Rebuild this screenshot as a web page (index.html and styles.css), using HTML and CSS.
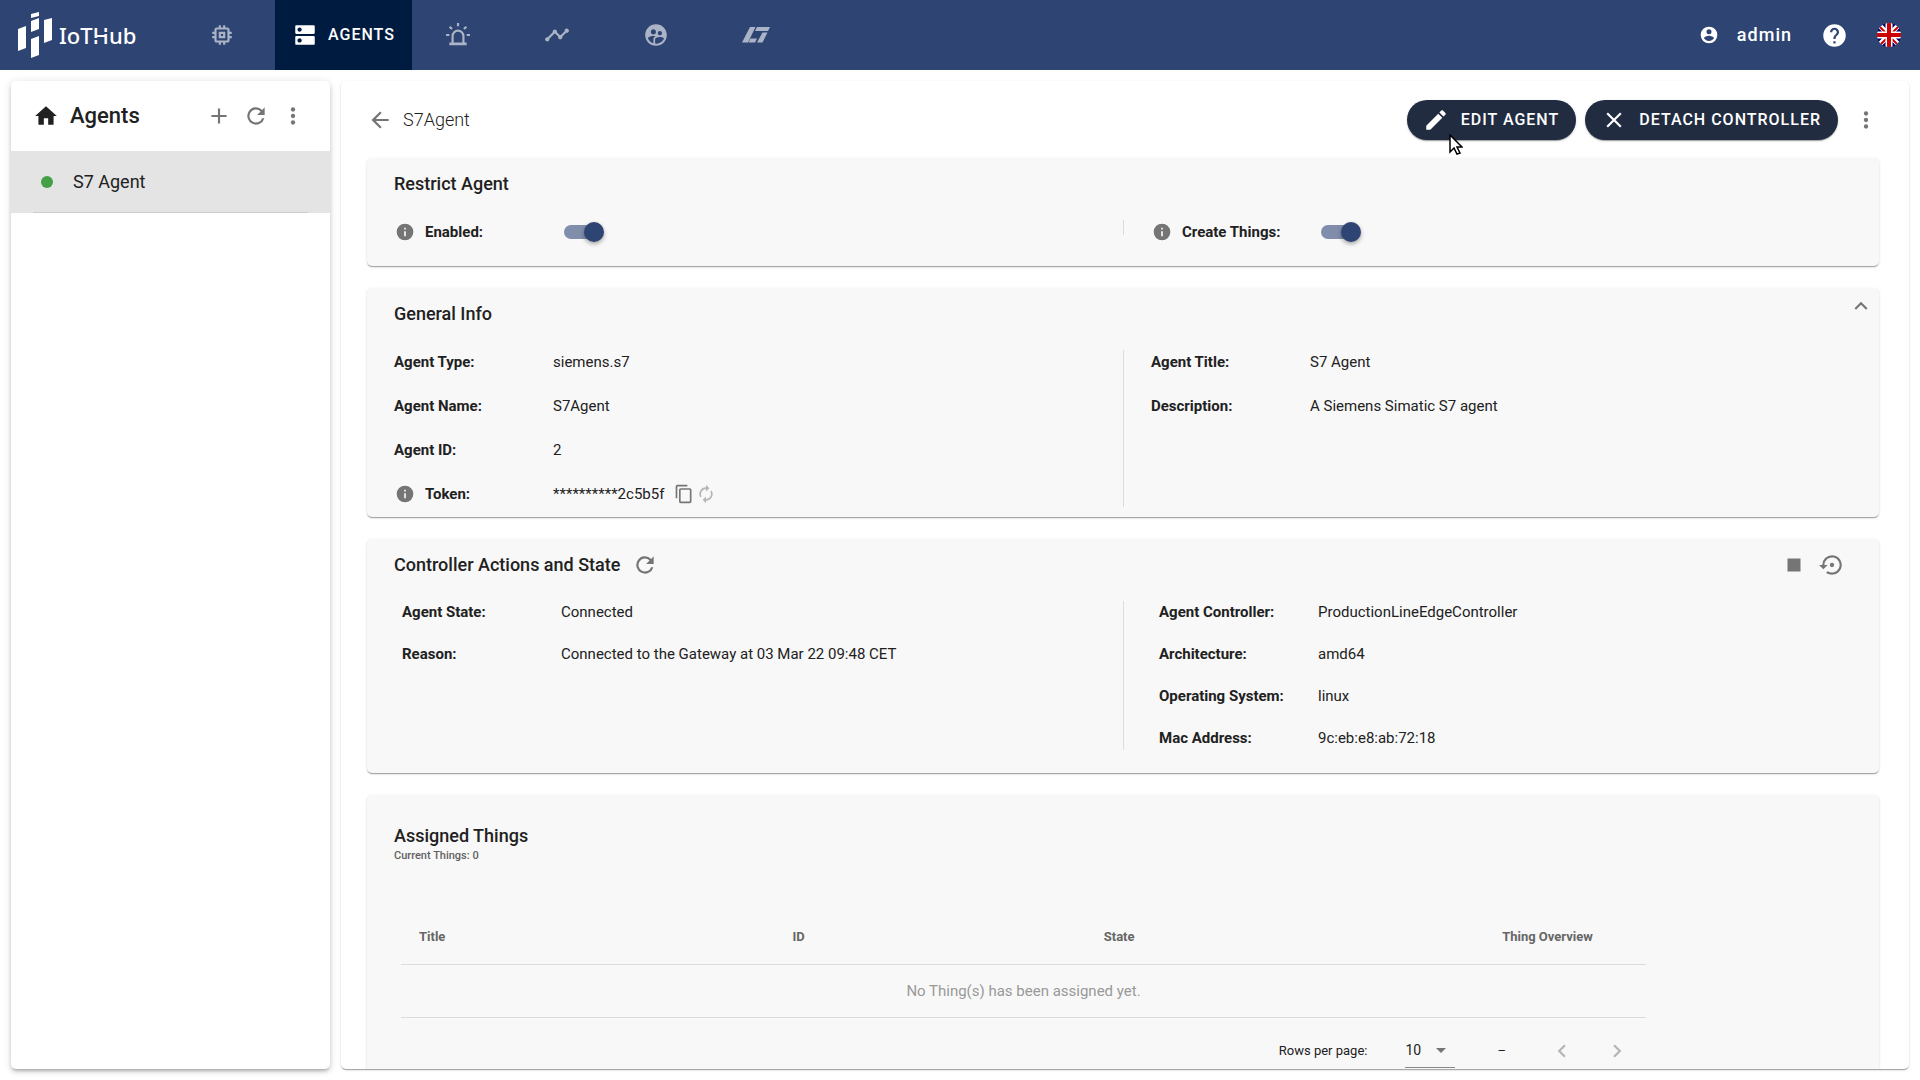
FILE: index.html
```html
<!DOCTYPE html>
<html lang="en">
<head>
<meta charset="utf-8">
<title>IoTHub - S7Agent</title>
<link rel="stylesheet" href="styles.css">
</head>
<body>
<header class="topbar">
  <a class="brand" href="#">
    <svg class="brand-mark" viewBox="0 0 35 47"><path d="M0 17l8-3v22l-8 3zM13 2l8-2v4l-8 2zM13 9l8-3v11l-8 3zM13 27l8-3v19l-8 3zM26 8l8-2v22l-8 3z"/></svg>
    <span class="brand-name">IoT<span class="brand-h">H</span>ub</span>
  </a>
  <nav class="tabs" aria-label="Main">
    <a class="tab" href="#" aria-label="Things"><svg class="icon" viewBox="0 0 24 24"><path d="M15 9H9v6h6V9zm-2 4h-2v-2h2v2zm8-2V9h-2V7c0-1.1-.9-2-2-2h-2V3h-2v2h-2V3H9v2H7c-1.1 0-2 .9-2 2v2H3v2h2v2H3v2h2v2c0 1.1.9 2 2 2h2v2h2v-2h2v2h2v-2h2c1.1 0 2-.9 2-2v-2h2v-2h-2v-2h2zm-4 6H7V7h10v10z"/></svg></a>
    <a class="tab tab-active" href="#" aria-current="page"><svg class="icon" viewBox="0 0 24 24"><path d="M20 13H4c-.55 0-1 .45-1 1v6c0 .55.45 1 1 1h16c.55 0 1-.45 1-1v-6c0-.55-.45-1-1-1zM7 19c-1.1 0-2-.9-2-2s.9-2 2-2 2 .9 2 2-.9 2-2 2zM20 3H4c-.55 0-1 .45-1 1v6c0 .55.45 1 1 1h16c.55 0 1-.45 1-1V4c0-.55-.45-1-1-1zM7 9c-1.1 0-2-.9-2-2s.9-2 2-2 2 .9 2 2-.9 2-2 2z"/></svg>AGENTS</a>
    <a class="tab" href="#" aria-label="Alarms"><svg class="icon" viewBox="0 0 24 24"><path d="M6 19v-6a6 6 0 0 1 12 0v6h2v2.500H4V19zM8 19h8v-6a4 4 0 0 0-8 0zM11 1h2v3h-2zM1 11h3v2H1zM20 11h3v2h-3zM3.600 5L5 3.600 7.200 5.800 5.800 7.200zM19 3.600L20.400 5 18.200 7.200 16.800 5.800z" fill-rule="evenodd"/></svg></a>
    <a class="tab" href="#" aria-label="Analytics"><svg class="icon" viewBox="0 0 24 24"><path d="M23 8c0 1.1-.9 2-2 2-.18 0-.35-.02-.51-.07l-3.560 3.550c.05.16.07.34.07.52 0 1.100-.9 2-2 2s-2-.9-2-2c0-.18.02-.36.07-.52l-2.550-2.550c-.16.05-.34.07-.52.07s-.36-.02-.52-.07l-4.550 4.560c.05.16.07.33.07.51 0 1.100-.9 2-2 2s-2-.9-2-2 .9-2 2-2c.18 0 .35.02.51.07l4.560-4.550C8.020 9.360 8 9.180 8 9c0-1.100.9-2 2-2s2 .9 2 2c0 .18-.02.36-.07.52l2.550 2.550c.16-.05.34-.07.52-.07s.36.02.52.07l3.550-3.560C19.020 8.350 19 8.180 19 8c0-1.100.9-2 2-2s2 .9 2 2z"/></svg></a>
    <a class="tab" href="#" aria-label="Users"><svg class="icon" viewBox="0 0 24 24"><path d="M11.990 2c-5.520 0-10 4.480-10 10s4.480 10 10 10 10-4.480 10-10-4.480-10-10-10zm3.610 6.340c1.070 0 1.930.86 1.930 1.930 0 1.070-.86 1.930-1.930 1.930-1.070 0-1.930-.86-1.930-1.930-.01-1.070.86-1.930 1.930-1.930zm-6-1.580c1.300 0 2.360 1.060 2.360 2.360 0 1.300-1.060 2.360-2.360 2.360s-2.360-1.060-2.360-2.360c0-1.310 1.050-2.360 2.360-2.360zm0 9.130v3.750c-2.400-.75-4.300-2.600-5.140-4.960 1.050-1.120 3.670-1.690 5.140-1.690.53 0 1.200.08 1.900.22-1.640.87-1.900 2.020-1.900 2.680zM11.990 20c-.27 0-.53-.01-.79-.04v-4.070c0-1.420 2.940-2.130 4.400-2.130 1.070 0 2.920.39 3.840 1.150-1.170 2.970-4.060 5.090-7.450 5.090z"/></svg></a>
    <a class="tab" href="#" aria-label="Integrations"><svg class="icon icon-wide" viewBox="0 0 28 16"><path d="M8 0h5.500L6 15.500H0zM15 0h13l-2 4H13zM20.500 5.500h5L20.500 15.500h-5.500zM8.500 11.500h6.500l-2 4H6.500z"/></svg></a>
  </nav>
  <div class="account">
    <button class="user" type="button"><svg class="icon-s" viewBox="0 0 24 24"><path d="M12 19.200c-2.500 0-4.710-1.280-6-3.200.03-2 4-3.100 6-3.100s5.970 1.100 6 3.100c-1.290 1.920-3.500 3.200-6 3.200M12 5a3 3 0 1 1 0 6 3 3 0 0 1 0-6m0-3a10 10 0 1 0 0 20 10 10 0 0 0 0-20"/></svg>admin</button>
    <button class="plain" type="button" aria-label="Help"><svg class="icon-l" viewBox="0 0 24 24"><path d="M15.070 11.250l-.9.920C13.450 12.890 13 13.500 13 15h-2v-.5c0-1.110.45-2.110 1.170-2.830l1.240-1.260A2 2 0 1 0 10 9H8a4 4 0 1 1 8 0c0 .88-.36 1.670-.93 2.250M13 19h-2v-2h2M12 2a10 10 0 1 0 0 20 10 10 0 0 0 0-20z"/></svg></button>
    <button class="plain" type="button" aria-label="Language: English"><svg class="flag" viewBox="0 0 24 24"><defs><clipPath id="disc"><circle cx="12" cy="12" r="12"/></clipPath></defs><g clip-path="url(#disc)"><path fill="#006" d="M0 0h24v24H0z"/><path stroke="#fff" stroke-width="5" d="M0 0l24 24M24 0L0 24"/><path stroke="#c00" stroke-width="2" d="M-1 0l24 24M25 0L1 24"/><path stroke="#fff" stroke-width="7" d="M12 0v24M0 12h24"/><path stroke="#c00" stroke-width="4" d="M12 0v24M0 12h24"/></g></svg></button>
  </div>
</header>

<div class="layout">
  <aside class="panel sidebar">
    <div class="side-head">
      <svg class="icon home" viewBox="0 0 24 24"><path d="M10 20v-6h4v6h5v-8h3L12 3 2 12h3v8h5z"/></svg>
      <h2 class="side-title">Agents</h2>
      <button class="plain" type="button" aria-label="Add"><svg class="icon" viewBox="0 0 24 24"><path d="M19 13h-6v6h-2v-6H5v-2h6V5h2v6h6v2z"/></svg></button>
      <button class="plain" type="button" aria-label="Refresh"><svg class="icon" viewBox="0 0 24 24"><path d="M17.650 6.350A8 8 0 1 0 19.730 14h-2.080A6 6 0 1 1 16.220 7.780L13 11h7V4l-2.350 2.350z"/></svg></button>
      <button class="plain" type="button" aria-label="More"><svg class="icon" viewBox="0 0 24 24"><circle cx="12" cy="6" r="2"/><circle cx="12" cy="12" r="2"/><circle cx="12" cy="18" r="2"/></svg></button>
    </div>
    <a class="side-item" href="#"><span class="dot"></span>S7 Agent</a>
    <hr class="side-rule">
  </aside>

  <main class="panel content">
    <div class="page-head">
      <button class="plain" type="button" aria-label="Back"><svg class="icon" viewBox="0 0 24 24"><path d="M20 11v2H8l5.500 5.500-1.420 1.420L4.160 12l7.920-7.920L13.500 5.500 8 11h12z"/></svg></button>
      <h1 class="page-title">S7Agent</h1>
      <button class="pill" type="button"><svg class="icon" viewBox="0 0 24 24"><path d="M20.710 7.040c.39-.39.39-1.040 0-1.410l-2.340-2.340c-.37-.39-1.020-.39-1.410 0l-1.840 1.830 3.750 3.750M3 17.250V21h3.750L17.810 9.930l-3.750-3.750L3 17.250z"/></svg>EDIT AGENT</button>
      <button class="pill" type="button"><svg class="icon" viewBox="0 0 24 24"><path d="M19 6.410L17.590 5 12 10.590 6.410 5 5 6.410 10.590 12 5 17.590 6.410 19 12 13.410 17.590 19 19 17.590 13.410 12 19 6.410z"/></svg>DETACH CONTROLLER</button>
      <button class="plain more" type="button" aria-label="More"><svg class="icon" viewBox="0 0 24 24"><circle cx="12" cy="6" r="2"/><circle cx="12" cy="12" r="2"/><circle cx="12" cy="18" r="2"/></svg></button>
      <svg class="pointer" viewBox="0 0 14 22"><path d="M1 1v17l4-4 3 6 3-1-3-6h5z" fill="#fff" stroke="#000" stroke-width="1.500"/></svg>
    </div>

    <section class="card restrict">
      <h2 class="card-title">Restrict Agent</h2>
      <div class="split">
        <div class="fields">
          <div class="field"><svg class="icon-s info" viewBox="0 0 24 24"><path d="M13 9h-2V7h2m0 10h-2v-6h2m-1-9a10 10 0 1 0 0 20 10 10 0 0 0 0-20z"/></svg><label class="name" for="enabled">Enabled:</label><input class="switch" id="enabled" type="checkbox" checked></div>
        </div>
        <div class="fields">
          <div class="field"><svg class="icon-s info" viewBox="0 0 24 24"><path d="M13 9h-2V7h2m0 10h-2v-6h2m-1-9a10 10 0 1 0 0 20 10 10 0 0 0 0-20z"/></svg><label class="name" for="create">Create Things:</label><input class="switch" id="create" type="checkbox" checked></div>
        </div>
      </div>
    </section>

    <section class="card general">
      <div class="card-head">
        <h2 class="card-title">General Info</h2>
        <button class="plain collapse" type="button" aria-label="Collapse"><svg class="icon" viewBox="0 0 24 24"><path d="M7.410 15.410L12 10.830l4.590 4.580L18 14l-6-6-6 6 1.410 1.410z"/></svg></button>
      </div>
      <div class="split">
        <dl class="fields">
          <div class="field"><dt class="name">Agent Type:</dt><dd>siemens.s7</dd></div>
          <div class="field"><dt class="name">Agent Name:</dt><dd>S7Agent</dd></div>
          <div class="field"><dt class="name">Agent ID:</dt><dd>2</dd></div>
          <div class="field"><dt class="name name-icon"><svg class="icon-s info" viewBox="0 0 24 24"><path d="M13 9h-2V7h2m0 10h-2v-6h2m-1-9a10 10 0 1 0 0 20 10 10 0 0 0 0-20z"/></svg>Token:</dt><dd class="token">**********2c5b5f
            <span class="token-tools">
              <button class="plain" type="button" aria-label="Copy token"><svg class="icon-s" viewBox="0 0 24 24"><path d="M19 21H8V7h11m0-2H8a2 2 0 0 0-2 2v14a2 2 0 0 0 2 2h11a2 2 0 0 0 2-2V7a2 2 0 0 0-2-2m-3-4H4a2 2 0 0 0-2 2v14h2V3h12V1z"/></svg></button>
              <button class="plain faded" type="button" aria-label="Renew token"><svg class="icon-s" viewBox="0 0 24 24"><path d="M12 6v3l4-4-4-4v3a8 8 0 0 0-6.760 12.260L6.700 14.800A6 6 0 0 1 12 6m6.760 1.740L17.300 9.200A6 6 0 0 1 12 18v-3l-4 4 4 4v-3a8 8 0 0 0 6.760-12.260z"/></svg></button>
            </span></dd></div>
        </dl>
        <dl class="fields">
          <div class="field"><dt class="name">Agent Title:</dt><dd>S7 Agent</dd></div>
          <div class="field"><dt class="name">Description:</dt><dd>A Siemens Simatic S7 agent</dd></div>
        </dl>
      </div>
    </section>

    <section class="card controller">
      <div class="card-head">
        <h2 class="card-title">Controller Actions and State</h2>
        <button class="plain reload" type="button" aria-label="Refresh state"><svg class="icon" viewBox="0 0 24 24"><path d="M17.650 6.350A8 8 0 1 0 19.730 14h-2.080A6 6 0 1 1 16.220 7.780L13 11h7V4l-2.350 2.350z"/></svg></button>
        <button class="plain" type="button" aria-label="Stop"><svg class="icon" viewBox="0 0 24 24"><path d="M6 6h12v12H6z"/></svg></button>
        <button class="plain" type="button" aria-label="Restart"><svg class="icon" viewBox="0 0 24 24"><path d="M12 3a9 9 0 0 0-9 9H0l4 4 4-4H5a7 7 0 1 1 2.940 5.700L6.500 19.140A9 9 0 1 0 12 3m2 9a2 2 0 1 0-4 0 2 2 0 0 0 4 0z"/></svg></button>
      </div>
      <div class="split">
        <dl class="fields">
          <div class="field"><dt class="name">Agent State:</dt><dd>Connected</dd></div>
          <div class="field"><dt class="name">Reason:</dt><dd>Connected to the Gateway at 03 Mar 22 09:48 CET</dd></div>
        </dl>
        <dl class="fields">
          <div class="field"><dt class="name">Agent Controller:</dt><dd>ProductionLineEdgeController</dd></div>
          <div class="field"><dt class="name">Architecture:</dt><dd>amd64</dd></div>
          <div class="field"><dt class="name">Operating System:</dt><dd>linux</dd></div>
          <div class="field"><dt class="name">Mac Address:</dt><dd>9c:eb:e8:ab:72:18</dd></div>
        </dl>
      </div>
    </section>

    <section class="card things">
      <h2 class="card-title">Assigned Things</h2>
      <p class="subtitle">Current Things: 0</p>
      <div class="table-area">
        <table class="table">
          <thead><tr><th class="col-title">Title</th><th class="col-id">ID</th><th class="col-state">State</th><th>Thing Overview</th></tr></thead>
          <tbody><tr><td class="empty" colspan="4">No Thing(s) has been assigned yet.</td></tr></tbody>
        </table>
        <div class="pager">
          <label for="rows">Rows per page:</label>
          <span class="select"><select id="rows"><option>10</option><option>25</option><option>50</option></select><svg class="caret" viewBox="0 0 10 5"><path d="M0 0h10L5 5z"/></svg></span>
          <span class="range">–</span>
          <button class="plain faded" type="button" aria-label="Previous page"><svg class="icon" viewBox="0 0 24 24"><path d="M15.410 16.580L10.830 12l4.580-4.590L14 6l-6 6 6 6 1.410-1.420z"/></svg></button>
          <button class="plain faded" type="button" aria-label="Next page"><svg class="icon" viewBox="0 0 24 24"><path d="M8.590 16.580L13.170 12 8.590 7.410 10 6l6 6-6 6-1.410-1.420z"/></svg></button>
        </div>
      </div>
    </section>
  </main>
</div>
</body>
</html>
```
FILE: styles.css
```css
* { box-sizing: border-box; }
body {
  margin: 0;
  height: 100vh;
  display: flex;
  flex-direction: column;
  font: 15px/20px Roboto, "Noto Sans", sans-serif;
  color: #212121;
  background: #fff;
}
h1, h2, p, dl, dd { margin: 0; }
a { color: inherit; text-decoration: none; }
button, select { font: inherit; color: inherit; }
svg { display: block; fill: currentColor; flex: none; }
.plain, .user { border: 0; padding: 0; background: none; color: #757575; cursor: pointer; }
.icon { width: 26px; height: 26px; }
.icon-s { width: 20px; height: 20px; }
.icon-l { width: 27px; height: 27px; }
.icon-wide { width: 28px; height: 16px; }

/* Top bar */
.topbar { flex: none; display: flex; height: 70px; background: #2e4472; color: #fff; }
.brand { display: flex; align-items: center; width: 176px; padding-left: 18px; gap: 6px; }
.brand-mark { width: 35px; height: 47px; }
.brand-name { font: 500 22px/28px "Noto Sans", sans-serif; }
.brand-h { position: relative; }
/* The two cuts in the stems of the logo's H */
.brand-h::before, .brand-h::after { content: ""; position: absolute; width: 5px; height: 2px; background: #2e4472; }
.brand-h::before { left: 1px; bottom: 10px; }
.brand-h::after { right: 1px; top: 12px; }
.tabs { display: flex; gap: 7px; }
.tab { display: flex; align-items: center; padding: 0 33px; color: #abb4c7; }
.tab-active {
  margin: 0 -7px 0 0;
  padding: 0 17px;
  gap: 10px;
  font-size: 16px;
  font-weight: 500;
  letter-spacing: 1px;
  color: #fff;
  background: #001b40;
}
.account { display: flex; align-items: center; gap: 29px; margin-left: auto; padding-right: 19px; }
.account .plain, .user { color: #fff; }
.user { display: flex; align-items: center; gap: 18px; font-size: 18px; font-weight: 500; letter-spacing: 1px; }
.flag { width: 24px; height: 24px; }

/* Panels */
.layout { flex: 1; min-height: 0; display: flex; gap: 11px; padding: 11px; }
.panel {
  background: #fff;
  border-radius: 5px;
  overflow: hidden;
  box-shadow: 0 2px 1px -1px rgba(0, 0, 0, .2), 0 1px 1px rgba(0, 0, 0, .14), 0 1px 3px rgba(0, 0, 0, .12);
}
.sidebar { flex: none; width: 319px; box-shadow: 0 3px 3px -2px rgba(0, 0, 0, .2), 0 3px 4px rgba(0, 0, 0, .14), 0 1px 8px rgba(0, 0, 0, .12); }
.side-head { display: flex; align-items: center; height: 70px; padding: 0 24px 0 22px; gap: 11px; }
.home { color: #212121; }
.side-title { flex: 1; font-size: 22px; line-height: 28px; font-weight: 500; }
.side-item { display: flex; align-items: center; height: 62px; padding-left: 30px; gap: 20px; font-size: 18px; background: #e4e4e4; }
.side-rule { height: 1px; margin: -1px 22px 0; border: 0; background: #ccc; }
.dot { width: 12px; height: 12px; border-radius: 50%; background: #43a047; }

.content { flex: 1; min-width: 0; padding: 0 30px 0 26px; }
.page-head { position: relative; display: flex; align-items: center; height: 77px; }
.page-title { flex: 1; margin-left: 10px; font-size: 18px; font-weight: 300; }
.pill {
  display: flex;
  align-items: center;
  height: 40px;
  margin-right: 9px;
  padding: 0 17px 0 16px;
  gap: 12px;
  border: 0;
  border-radius: 20px;
  font-size: 16px;
  font-weight: 500;
  letter-spacing: 1px;
  color: #fff;
  background: #212c41;
  box-shadow: 0 2px 1px -1px rgba(0, 0, 0, .2), 0 1px 1px rgba(0, 0, 0, .14), 0 1px 3px rgba(0, 0, 0, .12);
}
.more { margin-left: 6px; }
.pointer { position: absolute; top: 53px; right: 416px; width: 14px; height: 22px; }

/* Cards */
.card {
  margin-bottom: 22px;
  border-radius: 5px;
  background: #f8f8f8;
  box-shadow: 0 2px 1px -1px rgba(0, 0, 0, .2), 0 1px 1px rgba(0, 0, 0, .14), 0 1px 3px rgba(0, 0, 0, .12);
}
.card-title { font-size: 18px; line-height: 24px; font-weight: 500; }
.card-head { display: flex; align-items: center; height: 62px; padding: 0 34px 10px 27px; }
.split { display: grid; grid-template-columns: 1fr 1fr; }
.fields { display: flex; flex-direction: column; padding-left: 27px; }
.fields + .fields { border-left: 1px solid #dcdcdc; }
.field { display: flex; align-items: center; }
.name { width: 159px; font-weight: 700; }
.info { margin: 0 10px 0 1px; color: #757575; }
.name-icon { display: flex; align-items: center; }

.restrict { padding: 14px 0 31px; }
.restrict .card-title { padding-left: 27px; }
.restrict .split { margin-top: 24px; }
.restrict .fields { height: 15px; }
.restrict .field { flex: none; height: 24px; }
.restrict .name { width: 139px; }
.switch { appearance: none; position: relative; width: 40px; height: 20px; margin: 0; }
.switch::before { content: ""; position: absolute; left: 0; top: 3px; width: 34px; height: 14px; border-radius: 7px; background: #808eab; }
.switch::after { content: ""; position: absolute; right: 0; top: 0; width: 20px; height: 20px; border-radius: 50%; background: #2e4472; box-shadow: 0 2px 4px rgba(0, 0, 0, .35); }

.general { padding-bottom: 10px; }
.general .card-head { justify-content: space-between; padding-right: 5px; }
.collapse { align-self: flex-start; margin-top: 5px; }
.general .fields { gap: 20px; height: 157px; }
.general .field { height: 24px; }
.token { display: flex; align-items: center; gap: 10px; }
.token-tools { display: flex; gap: 2px; }
.faded { opacity: .5; }

.controller { padding-bottom: 23px; }
.controller .card-head { gap: 12px; }
.reload { margin-right: auto; }
.controller .fields { gap: 22px; padding: 1px 0 0 35px; height: 149px; }

.things { padding: 29px 0 24px; }
.things .card-title, .subtitle { padding-left: 27px; }
.subtitle { font-size: 11px; line-height: 16px; font-weight: 500; color: #616161; }
.table-area { width: calc((100% - 18px) * 5 / 6); margin: 47px 0 0 34px; }
.table { width: 100%; border-collapse: collapse; }
.table th { height: 53px; padding: 0 0 0 18px; text-align: left; font-size: 13px; font-weight: 700; color: #666; border-bottom: 1px solid #dcdcdc; }
.table td { height: 53px; border-bottom: 1px solid #dcdcdc; }
.col-title { width: 30%; }
.col-id { width: 25%; }
.col-state { width: 32%; }
.table .empty { text-align: center; color: #999; }
.pager { display: flex; align-items: center; justify-content: flex-end; height: 66px; font-size: 13px; }
.select { display: flex; align-items: center; width: 50px; height: 34px; margin: 0 42px 0 38px; border-bottom: 1px solid #888; position: relative; }
.select select { appearance: none; width: 50px; border: 0; padding: 0; background: none; font-size: 14px; }
.caret { position: absolute; right: 9px; width: 10px; height: 5px; color: #757575; pointer-events: none; }
.range { margin-right: 30px; }
.pager .plain { margin-right: 16px; margin-left: 13px; }
```
